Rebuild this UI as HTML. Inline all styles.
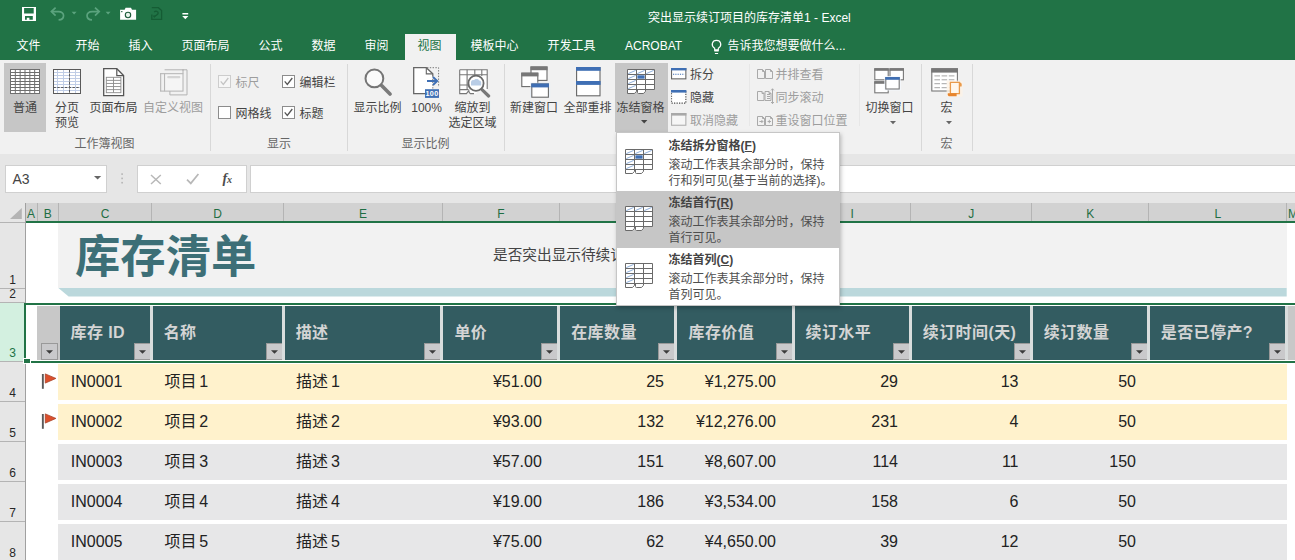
<!DOCTYPE html>
<html lang="zh-CN">
<head>
<meta charset="utf-8">
<title>突出显示续订项目的库存清单1 - Excel</title>
<style>
html,body{margin:0;padding:0}
body{width:1295px;height:560px;overflow:hidden;position:relative;background:#fff;font-family:"Liberation Sans","Noto Sans CJK SC",sans-serif;color:#444;font-size:12px}
.b,.t,.ic{position:absolute}
.t{white-space:nowrap}
</style>
</head>
<body>
<div class="b" style="left:0px;top:0px;width:1295px;height:60px;background:#217346;"></div>
<div class="t" style="top:10px;font-size:12px;line-height:16px;height:16px;left:648.08px;color:#fff;">突出显示续订项目的库存清单1 - Excel</div>
<svg class="ic" style="left:22px;top:7px;" width="14" height="14" viewBox="0 0 14 14"><path fill="#fff" fill-rule="evenodd" d="M0 0H14V14H0z M2.1 1.1H11.7V6.5H2.1z M3 9.1H10.8V12.7H7.4V10.8H4.8V12.7H3z"/></svg>
<svg class="ic" style="left:50px;top:6px;" width="28" height="16" viewBox="0 0 28 16"><g fill="none" stroke="#5ba37e" stroke-width="1.7"><path d="M5.6 1.6L1.4 5.6L5.6 9.6"/><path d="M1.6 5.6H8.4C15.5 5.6 15 13.6 8.6 13.9"/></g><path d="M21.6 5.8H26.6L24.1 8.4z" fill="#5ba37e"/></svg>
<svg class="ic" style="left:85px;top:6px;" width="28" height="16" viewBox="0 0 28 16"><g fill="none" stroke="#5ba37e" stroke-width="1.7"><path d="M10 1.6L14.2 5.6L10 9.6"/><path d="M14 5.6H7.2C0.1 5.6 0.6 13.6 7 13.9"/></g><path d="M20.6 5.8H25.6L23.1 8.4z" fill="#5ba37e"/></svg>
<svg class="ic" style="left:119px;top:7px;" width="19" height="14" viewBox="0 0 19 14"><path fill="#fff" d="M1.1 2.8H5.6L6.6 .8H12L13 2.8H17.1V12.8H1.1z"/><circle cx="9" cy="8" r="2.7" fill="#e8f4ec" stroke="#1d5c3a" stroke-width="1.1"/><rect x="2.2" y="4" width="1.2" height="1.2" fill="#1d5c3a"/></svg>
<svg class="ic" style="left:150px;top:6px;" width="14" height="15" viewBox="0 0 14 15"><g fill="none" stroke="#155c34" stroke-width="1.3"><path d="M1.8 1.7H8.4L11.6 4.6V13.4H1.8V8.5"/><path d="M4.2 6.2C5.6 4.4 8.4 5.2 8.2 7.2C8 8.8 6 9.3 4.4 10.6"/></g><path d="M2.6 9.4L4.2 12L6.4 9.6z" fill="#155c34"/></svg>
<svg class="ic" style="left:182px;top:12px;" width="7" height="8" viewBox="0 0 7 8"><path fill="#fff" d="M.4 1H6.2V2.4H.4z M.2 3.9H6.4L3.3 7.2z"/></svg>
<div class="b" style="left:405px;top:34px;width:51px;height:26px;background:#f1f1f1;"></div>
<div class="t" style="top:38px;font-size:12px;line-height:16px;height:16px;left:16.58px;color:#fff;">文件</div>
<div class="t" style="top:38px;font-size:12px;line-height:16px;height:16px;left:75.58px;color:#fff;">开始</div>
<div class="t" style="top:38px;font-size:12px;line-height:16px;height:16px;left:128.58px;color:#fff;">插入</div>
<div class="t" style="top:38px;font-size:12px;line-height:16px;height:16px;left:181.58px;color:#fff;">页面布局</div>
<div class="t" style="top:38px;font-size:12px;line-height:16px;height:16px;left:258.58px;color:#fff;">公式</div>
<div class="t" style="top:38px;font-size:12px;line-height:16px;height:16px;left:311.58px;color:#fff;">数据</div>
<div class="t" style="top:38px;font-size:12px;line-height:16px;height:16px;left:364.58px;color:#fff;">审阅</div>
<div class="t" style="top:38px;font-size:12px;line-height:16px;height:16px;left:470.58px;color:#fff;">模板中心</div>
<div class="t" style="top:38px;font-size:12px;line-height:16px;height:16px;left:547.58px;color:#fff;">开发工具</div>
<div class="t" style="top:38px;font-size:12px;line-height:16px;height:16px;left:625px;color:#fff;">ACROBAT</div>
<div class="t" style="top:38px;font-size:12px;line-height:16px;height:16px;left:727.58px;color:#fff;">告诉我您想要做什么...</div>
<div class="t" style="top:38px;font-size:12px;line-height:16px;height:16px;left:417.58px;color:#217346;">视图</div>
<svg class="ic" style="left:710px;top:39px;" width="13" height="16" viewBox="0 0 13 16"><g fill="none" stroke="#fff" stroke-width="1.2"><path d="M4.6 9.2C.6 6.6 2 1.4 6.5 1.4C11 1.4 12.4 6.6 8.4 9.2L8.2 11.2H4.8z"/></g><path d="M4.3 10.6H8.7V12.6H4.3z M4.9 14H8.1V15H4.9z" fill="#fff"/></svg>
<div class="b" style="left:0px;top:60px;width:1295px;height:94px;background:#f1f1f1;"></div>
<div class="b" style="left:0px;top:153.5px;width:1295px;height:1px;background:#d2d2d2;"></div>
<div class="b" style="left:210px;top:64px;width:1px;height:87px;background:#d8d8d8;"></div>
<div class="b" style="left:347px;top:64px;width:1px;height:87px;background:#d8d8d8;"></div>
<div class="b" style="left:504px;top:64px;width:1px;height:87px;background:#d8d8d8;"></div>
<div class="b" style="left:921px;top:64px;width:1px;height:87px;background:#d8d8d8;"></div>
<div class="b" style="left:972px;top:64px;width:1px;height:87px;background:#d8d8d8;"></div>
<div class="b" style="left:749px;top:64px;width:1px;height:62px;background:#e7e7e7;"></div>
<div class="b" style="left:859px;top:64px;width:1px;height:62px;background:#e7e7e7;"></div>
<div class="b" style="left:4px;top:63px;width:42px;height:69px;background:#c6c6c6;"></div>
<div class="b" style="left:615px;top:63px;width:53px;height:69px;background:#c6c6c6;"></div>
<div class="t" style="top:100px;font-size:12px;line-height:16px;height:16px;left:-175px;width:400px;text-align:center;">普通</div>
<div class="t" style="top:100px;font-size:12px;line-height:16px;height:16px;left:-133px;width:400px;text-align:center;">分页</div>
<div class="t" style="top:114.5px;font-size:12px;line-height:16px;height:16px;left:-133px;width:400px;text-align:center;">预览</div>
<div class="t" style="top:100px;font-size:12px;line-height:16px;height:16px;left:89.58px;">页面布局</div>
<div class="t" style="top:100px;font-size:12px;line-height:16px;height:16px;left:143.08px;color:#9d9d9d;">自定义视图</div>
<div class="t" style="top:100px;font-size:12px;line-height:16px;height:16px;left:353.58px;">显示比例</div>
<div class="t" style="top:100px;font-size:12px;line-height:16px;height:16px;left:226.6px;width:400px;text-align:center;">100%</div>
<div class="t" style="top:100px;font-size:12px;line-height:16px;height:16px;left:454.58px;">缩放到</div>
<div class="t" style="top:114.5px;font-size:12px;line-height:16px;height:16px;left:448.58px;">选定区域</div>
<div class="t" style="top:100px;font-size:12px;line-height:16px;height:16px;left:510.08px;">新建窗口</div>
<div class="t" style="top:100px;font-size:12px;line-height:16px;height:16px;left:563.58px;">全部重排</div>
<div class="t" style="top:100px;font-size:12px;line-height:16px;height:16px;left:616.58px;">冻结窗格</div>
<div class="t" style="top:100px;font-size:12px;line-height:16px;height:16px;left:865.58px;">切换窗口</div>
<div class="t" style="top:100px;font-size:12px;line-height:16px;height:16px;left:940.58px;">宏</div>
<div class="t" style="top:136px;font-size:12px;line-height:16px;height:16px;left:74.58px;color:#666;">工作簿视图</div>
<div class="t" style="top:136px;font-size:12px;line-height:16px;height:16px;left:267.08px;color:#666;">显示</div>
<div class="t" style="top:136px;font-size:12px;line-height:16px;height:16px;left:401.58px;color:#666;">显示比例</div>
<div class="t" style="top:136px;font-size:12px;line-height:16px;height:16px;left:940.58px;color:#666;">宏</div>
<svg class="ic" style="left:218px;top:75px;" width="13" height="13" viewBox="0 0 13 13"><rect x=".5" y=".5" width="12" height="12" fill="#f6f6f6" stroke="#cdcdcd"/><path d="M2.7 6.4L5.3 9.4L10.3 3" fill="none" stroke="#c4c4c4" stroke-width="1.3"/></svg>
<div class="t" style="top:74.5px;font-size:12px;line-height:16px;height:16px;left:235.58px;color:#9d9d9d;">标尺</div>
<svg class="ic" style="left:282px;top:75px;" width="13" height="13" viewBox="0 0 13 13"><rect x=".5" y=".5" width="12" height="12" fill="#fff" stroke="#8c8c8c"/><path d="M2.7 6.4L5.3 9.4L10.3 3" fill="none" stroke="#555" stroke-width="1.3"/></svg>
<div class="t" style="top:74.5px;font-size:12px;line-height:16px;height:16px;left:299.58px;">编辑栏</div>
<svg class="ic" style="left:218px;top:106px;" width="13" height="13" viewBox="0 0 13 13"><rect x=".5" y=".5" width="12" height="12" fill="#fff" stroke="#8c8c8c"/></svg>
<div class="t" style="top:105.5px;font-size:12px;line-height:16px;height:16px;left:235.58px;">网格线</div>
<svg class="ic" style="left:282px;top:106px;" width="13" height="13" viewBox="0 0 13 13"><rect x=".5" y=".5" width="12" height="12" fill="#fff" stroke="#8c8c8c"/><path d="M2.7 6.4L5.3 9.4L10.3 3" fill="none" stroke="#555" stroke-width="1.3"/></svg>
<div class="t" style="top:105.5px;font-size:12px;line-height:16px;height:16px;left:299.58px;">标题</div>
<div class="t" style="top:67px;font-size:12px;line-height:16px;height:16px;left:689.88px;">拆分</div>
<div class="t" style="top:90px;font-size:12px;line-height:16px;height:16px;left:689.88px;">隐藏</div>
<div class="t" style="top:113px;font-size:12px;line-height:16px;height:16px;left:689.88px;color:#9d9d9d;">取消隐藏</div>
<div class="t" style="top:67px;font-size:12px;line-height:16px;height:16px;left:775.58px;color:#9d9d9d;">并排查看</div>
<div class="t" style="top:90px;font-size:12px;line-height:16px;height:16px;left:775.58px;color:#9d9d9d;">同步滚动</div>
<div class="t" style="top:113px;font-size:12px;line-height:16px;height:16px;left:775.58px;color:#9d9d9d;">重设窗口位置</div>
<svg class="ic" style="left:10px;top:69px;" width="30" height="25" viewBox="0 0 30 25"><rect x=".5" y=".5" width="29" height="24" fill="#fff"/><g stroke="#6e6e6e" stroke-width="1" fill="none"><path d="M0.5 0V25"/><path d="M5.33 0V25"/><path d="M10.17 0V25"/><path d="M15 0V25"/><path d="M19.83 0V25"/><path d="M24.67 0V25"/><path d="M29.5 0V25"/><path d="M0 0.5H30"/><path d="M0 3.5H30"/><path d="M0 6.5H30"/><path d="M0 9.5H30"/><path d="M0 12.5H30"/><path d="M0 15.5H30"/><path d="M0 18.5H30"/><path d="M0 21.5H30"/><path d="M0 24.5H30"/></g></svg>
<svg class="ic" style="left:53px;top:69px;" width="28" height="25" viewBox="0 0 28 25"><rect x=".5" y=".5" width="27" height="24" fill="#fff"/><g stroke="#c0cde6" stroke-width="1" fill="none"><path d="M4.5 0V25"/><path d="M10.5 0V25"/><path d="M22.5 0V25"/><path d="M0 3.5H28"/><path d="M0 6.5H28"/><path d="M0 9.5H28"/><path d="M0 12.5H28"/><path d="M0 15.5H28"/><path d="M0 18.5H28"/><path d="M0 21.5H28"/></g><g stroke="#595959" stroke-width="1" fill="none"><rect x=".5" y=".5" width="27" height="24"/><path d="M16.5 .5V25" stroke-dasharray="3.2 .8"/><path d="M.5 18.5H28" stroke-dasharray="2.4 1.4"/></g></svg>
<svg class="ic" style="left:102.5px;top:67.6px;" width="22" height="29" viewBox="0 0 22 29"><path d="M.7 .7H13.8L20.6 7.6V27.6H.7z" fill="#fff" stroke="#555" stroke-width="1.3"/><path d="M13.8 .7V7.6H20.6" fill="none" stroke="#555" stroke-width="1.2"/><g stroke="#8a8a8a" stroke-width=".9" fill="none"><rect x="3.3" y="9.3" width="14.6" height="15.4"/><path d="M10.5 9.3V24.7"/><path d="M3.3 12.38H17.9"/><path d="M3.3 15.46H17.9"/><path d="M3.3 18.54H17.9"/><path d="M3.3 21.62H17.9"/></g></svg>
<svg class="ic" style="left:159.5px;top:68.5px;" width="28" height="27" viewBox="0 0 28 27"><g fill="none" stroke="#b2b2b2" stroke-width="1"><rect x="4.6" y="4.7" width="18.4" height="17.4" fill="#f5f5f5"/><path d="M.7 4.7V22.1M0 4.7H4.6M0 22.1H4.6"/><path d="M4.6 .8H23V4.7M23 .8H27V25.9H9.9V22.1M23 0V1.6"/></g><rect x="7.2" y="7" width="13.2" height="2.3" rx="1" fill="#d4d4d4"/></svg>
<svg class="ic" style="left:363.6px;top:67.6px;" width="28" height="28" viewBox="0 0 28 28"><path d="M17.6 17.6L26 26" stroke="#7a7a7a" stroke-width="3.6" stroke-linecap="round"/><circle cx="10.4" cy="10.4" r="8.9" fill="#fafafa" stroke="#757575" stroke-width="2"/></svg>
<svg class="ic" style="left:413px;top:66.8px;" width="27" height="31.5" viewBox="0 0 27 31.5"><path d="M.7 .7H13.3L19.8 6.9V26.6H.7z" fill="#fff"/><path d="M19.8 9V6.9L13.3 .7H.7V26.6H12" fill="none" stroke="#666" stroke-width="1.3"/><path d="M13.3 .7V6.9H19.8" fill="none" stroke="#666" stroke-width="1.1"/><path d="M14 .7H25.6V20M19.8 9V21.5" fill="none" stroke="#777" stroke-width="1" stroke-dasharray="1.4 1.4"/><path d="M14 14H23.6M20 10L24.2 14L20 18" fill="none" stroke="#3f6fb4" stroke-width="1.9"/><rect x="12" y="22.2" width="14" height="8.7" fill="#3f6fb4"/><text x="19" y="29.4" font-family="Liberation Sans, sans-serif" font-size="7.2" font-weight="bold" fill="#fff" text-anchor="middle" letter-spacing=".3">100</text></svg>
<svg class="ic" style="left:458.5px;top:68.5px;" width="32" height="29" viewBox="0 0 32 29"><path d="M.7 .7H28.2V21H19.2L17.4 24.6H10.6L9.8 21.6L7.4 24.6H.7z" fill="#fff"/><g fill="none" stroke="#777" stroke-width="1.1"><path d="M.7 .7H28.2V20M.7 .7V24.6H7.4L9.8 21.6C10 23.4 10.4 24.4 11.4 24.6H15"/><path d="M8.1 .7V21M15.8 .7V7M22.8 .7V7M.7 5.8H28.2M.7 16H9M.7 20.6H9.6"/></g><path d="M23 20.6L29.6 27" stroke="#777" stroke-width="3.2" stroke-linecap="round"/><circle cx="17" cy="14.3" r="7.6" fill="#fff" stroke="#6a6a6a" stroke-width="1.8"/><path d="M12 16.6V13.4C12 11.6 13.4 10.6 15 11.2C15.8 9.6 19.4 9.4 20 11.4C21.6 11.2 22.2 12.4 22.2 13.6V16.6z" fill="#b9cde6"/></svg>
<svg class="ic" style="left:520.5px;top:66px;" width="30" height="33" viewBox="0 0 30 33"><rect x="10" y="1" width="16" height="13.4" fill="#fff" stroke="#6a6a6a" stroke-width="1.1"/><rect x="9.45" y="0.45" width="17.1" height="3.75" fill="#777"/><rect x="0.8" y="7.2" width="16" height="13.4" fill="#fff" stroke="#6a6a6a" stroke-width="1.1"/><rect x="0.25" y="6.65" width="17.1" height="3.75" fill="#777"/><rect x="9.2" y="16.6" width="20" height="15" fill="#e6f0fb" opacity=".7"/><rect x="10.8" y="18" width="16.6" height="13.2" fill="#fff" stroke="#6a6a6a" stroke-width="1.1"/><rect x="10.25" y="17.45" width="17.7" height="3.95" fill="#3f6fb4"/></svg>
<svg class="ic" style="left:575.6px;top:66.9px;" width="25" height="30" viewBox="0 0 25 30"><rect x=".6" y=".6" width="23.4" height="28.2" fill="#fff" stroke="#666" stroke-width="1.1"/><rect x="0" y="0" width="24.6" height="3.8" fill="#3f6fb4"/><rect x="0" y="14" width="24.6" height="3.9" fill="#3f6fb4"/></svg>
<svg class="ic" style="left:626px;top:68px;" width="30" height="27" viewBox="0 0 30 27"><g transform="translate(1.5 1.5)"><path fill="#fff" d="M0 0H27V20H18V22L16 24H10V20H9V22L7 24H0z"/><path d="M0.8 4.1L8.2 0.9" stroke="#8fb0dc" stroke-width="1" fill="none"/><path d="M9.8 4.1L17.2 0.9" stroke="#8fb0dc" stroke-width="1" fill="none"/><path d="M18.8 4.1L26.2 0.9" stroke="#8fb0dc" stroke-width="1" fill="none"/><path d="M0.8 9.1L8.2 5.9" stroke="#8fb0dc" stroke-width="1" fill="none"/><path d="M0.8 14.1L8.2 10.9" stroke="#8fb0dc" stroke-width="1" fill="none"/><path d="M0.8 19.1L8.2 15.9" stroke="#8fb0dc" stroke-width="1" fill="none"/><rect x="9.9" y="5.8" width="7.2" height="3.4" fill="#3f6fb4"/><g fill="none" stroke="#6a6a6a" stroke-width="1"><path d="M0 0H27V20H0z"/><path d="M9 0V20"/><path d="M18 0V20"/><path d="M0 5H27"/><path d="M0 10H27"/><path d="M0 15H27"/><path d="M0 20V24H7L9 21.8V20"/><path d="M10 20V23Q10 24 11 24H16L18 21.8V20"/></g></g></svg>
<svg class="ic" style="left:640.6px;top:120.4px;" width="7" height="4" viewBox="0 0 7 4"><path d="M0 0H6.4L3.2 3.4z" fill="#444"/></svg>
<svg class="ic" style="left:670.8px;top:68.2px;" width="16" height="12" viewBox="0 0 16 12"><rect x=".55" y=".55" width="14.3" height="10.3" fill="#fff" stroke="#666" stroke-width="1.1"/><rect width="15.4" height="2.4" fill="#3f6fb4"/><path d="M2 6.3H13.6" stroke="#3f6fb4" stroke-width="1.1" stroke-dasharray="1.2 1.1"/></svg>
<svg class="ic" style="left:670.8px;top:90px;" width="16" height="14.5" viewBox="0 0 16 14.5"><rect x=".55" y=".55" width="14.3" height="12.6" fill="#fff" stroke="#444" stroke-width="1.1" stroke-dasharray="1.2 1.3"/><rect width="15.4" height="2.6" fill="#3f6fb4"/></svg>
<svg class="ic" style="left:670.8px;top:113.2px;" width="16" height="13.5" viewBox="0 0 16 13.5"><rect x=".55" y=".55" width="14.3" height="11.7" fill="#f6f6f6" stroke="#b0b0b0" stroke-width="1.1"/><rect width="15.4" height="2.6" fill="#a8a8a8"/></svg>
<svg class="ic" style="left:757px;top:68.5px;" width="17" height="11" viewBox="0 0 17 11"><g fill="none" stroke="#a9a9a9" stroke-width="1"><path d="M5.5 0.5H0.5V9.5H7.5V2.5z"/><path d="M5.5 0.5V2.5H7.5"/><path d="M13.5 0.5H8.5V9.5H15.5V2.5z"/><path d="M13.5 0.5V2.5H15.5"/></g></svg>
<svg class="ic" style="left:757px;top:88px;" width="18" height="17" viewBox="0 0 18 17"><g fill="none" stroke="#a9a9a9" stroke-width="1"><path d="M5 3.5H0.5V12.5H7V5.5z"/><path d="M5 3.5V5.5H7"/><path d="M12 3.5H8V12.5H14V5.5z"/><path d="M12 3.5V5.5H14"/><path d="M10 6.5H13M10 8.5H13M10 10.5H13M15.5 .8V15.6M14.1 2.4L15.5 .8L16.9 2.4M14.1 14L15.5 15.6L16.9 14"/></g></svg>
<svg class="ic" style="left:757px;top:115.5px;" width="17" height="11" viewBox="0 0 17 11"><g fill="none" stroke="#a9a9a9" stroke-width="1"><path d="M5.5 0.5H0.5V9.5H7.5V2.5z"/><path d="M5.5 0.5V2.5H7.5"/><path d="M13.5 0.5H8.5V9.5H15.5V2.5z"/><path d="M13.5 0.5V2.5H15.5"/><path d="M2.4 5.5H5.8M4.4 4L5.9 5.5L4.4 7M10.6 5.5H14M12.3 3.8V7.2"/></g></svg>
<svg class="ic" style="left:874.4px;top:67.5px;" width="31" height="26" viewBox="0 0 31 26"><rect x="0.8" y="0.8" width="13.4" height="11" fill="#fff" stroke="#777" stroke-width="1.1"/><rect x="0.25" y="0.25" width="14.5" height="2.55" fill="#777"/><rect x="16" y="0.8" width="13.4" height="11" fill="#fff" stroke="#777" stroke-width="1.1"/><rect x="15.45" y="0.25" width="14.5" height="2.55" fill="#777"/><rect x="0.8" y="13.8" width="13.4" height="11" fill="#fff" stroke="#777" stroke-width="1.1"/><rect x="0.25" y="13.25" width="14.5" height="2.55" fill="#777"/><rect x="10.4" y="8.2" width="16.2" height="14.2" fill="#f4f9ff"/><rect x="11.8" y="9.6" width="13.4" height="11.4" fill="#fff" stroke="#777" stroke-width="1.1"/><rect x="11.25" y="9.05" width="14.5" height="2.75" fill="#3f6fb4"/></svg>
<svg class="ic" style="left:889.6px;top:120.8px;" width="7" height="4" viewBox="0 0 7 4"><path d="M0 0H6L3 3.2z" fill="#666"/></svg>
<svg class="ic" style="left:931.4px;top:67.5px;" width="33" height="30" viewBox="0 0 33 30"><rect x="0.8" y="0.8" width="25.6" height="22.2" fill="#fff" stroke="#777" stroke-width="1.1"/><rect x="0.25" y="0.25" width="26.7" height="4.35" fill="#777"/><path d="M3.4 7.9H23.4" stroke="#a6a6a6" stroke-width="1" stroke-dasharray="5.6 1.6"/><path d="M3.4 11.8H23.4" stroke="#a6a6a6" stroke-width="1" stroke-dasharray="5.6 1.6"/><path d="M3.4 15.7H23.4" stroke="#a6a6a6" stroke-width="1" stroke-dasharray="5.6 1.6"/><path d="M3.4 19.7H23.4" stroke="#a6a6a6" stroke-width="1" stroke-dasharray="5.6 1.6"/><rect x="15.6" y="12.6" width="16" height="16" fill="#fdf3e6" opacity=".8"/><path d="M19.4 14.4H28.4V25.6H19.4z" fill="#fff7ec" stroke="#e99a4a" stroke-width="1.3"/><path d="M17 25.2H25.6V28.2H18.4C16.6 28.2 16.4 25.6 17 25.2z" fill="#e8852c"/><path d="M28.4 14.4C30.8 14.2 31 16.4 30.6 18.4H28.4z" fill="#e99a4a"/></svg>
<svg class="ic" style="left:945.6px;top:120.8px;" width="7" height="4" viewBox="0 0 7 4"><path d="M0 0H6L3 3.2z" fill="#666"/></svg>
<div class="b" style="left:0px;top:154px;width:1295px;height:49px;background:#e6e6e6;"></div>
<div class="b" style="left:5px;top:165px;width:102px;height:28px;background:#fff;border:1px solid #d0d0d0;box-sizing:border-box;"></div>
<div class="b" style="left:137px;top:165px;width:110px;height:28px;background:#fff;border:1px solid #d0d0d0;box-sizing:border-box;"></div>
<div class="b" style="left:250px;top:165px;width:1050px;height:28px;background:#fff;border:1px solid #d0d0d0;box-sizing:border-box;"></div>
<div class="t" style="top:170px;font-size:14px;line-height:18px;height:18px;left:12.5px;color:#444;">A3</div>
<svg class="ic" style="left:94px;top:176.3px;" width="8" height="4" viewBox="0 0 8 4"><path d="M0 0H7.2L3.6 3.6z" fill="#666"/></svg>
<svg class="ic" style="left:120.8px;top:173px;" width="3" height="11" viewBox="0 0 3 11"><g fill="#b4b4b4"><rect x=".3" y=".3" width="1.6" height="1.6"/><rect x=".3" y="4.6" width="1.6" height="1.6"/><rect x=".3" y="8.9" width="1.6" height="1.6"/></g></svg>
<svg class="ic" style="left:150px;top:173.6px;" width="12" height="11" viewBox="0 0 12 11"><path d="M1 1L10.8 10M10.8 1L1 10" stroke="#b8b8b8" stroke-width="1.5" fill="none"/></svg>
<svg class="ic" style="left:185.6px;top:173.4px;" width="14" height="12" viewBox="0 0 14 12"><path d="M1 6.6L4.8 10.4L12.4 1" stroke="#b8b8b8" stroke-width="1.7" fill="none"/></svg>
<div class="t" style="left:222.5px;top:170px;font-family:'Liberation Serif',serif;font-style:italic;font-size:14px;line-height:18px;color:#4c4c4c;font-weight:bold">f<span style="font-size:10px;margin-left:-.3px">x</span></div>
<div class="b" style="left:0px;top:203px;width:1295px;height:357px;background:#fff;"></div>
<div class="b" style="left:0px;top:203px;width:1295px;height:18px;background:#d2d2d2;"></div>
<div class="b" style="left:0px;top:203px;width:25px;height:19px;background:#e6e6e6;"></div>
<div class="b" style="left:25px;top:221px;width:1270px;height:2px;background:#217346;"></div>
<div class="t" style="top:206px;font-size:12px;line-height:16px;height:16px;left:-169px;width:400px;text-align:center;color:#1f6e43;">A</div>
<div class="t" style="top:206px;font-size:12px;line-height:16px;height:16px;left:-152.2px;width:400px;text-align:center;color:#1f6e43;">B</div>
<div class="b" style="left:37px;top:203px;width:1px;height:18px;background:#b4b4b4;"></div>
<div class="t" style="top:206px;font-size:12px;line-height:16px;height:16px;left:-94.85px;width:400px;text-align:center;color:#1f6e43;">C</div>
<div class="b" style="left:58px;top:203px;width:1px;height:18px;background:#b4b4b4;"></div>
<div class="t" style="top:206px;font-size:12px;line-height:16px;height:16px;left:17.7px;width:400px;text-align:center;color:#1f6e43;">D</div>
<div class="b" style="left:151px;top:203px;width:1px;height:18px;background:#b4b4b4;"></div>
<div class="t" style="top:206px;font-size:12px;line-height:16px;height:16px;left:163.05px;width:400px;text-align:center;color:#1f6e43;">E</div>
<div class="b" style="left:283px;top:203px;width:1px;height:18px;background:#b4b4b4;"></div>
<div class="t" style="top:206px;font-size:12px;line-height:16px;height:16px;left:300.8px;width:400px;text-align:center;color:#1f6e43;">F</div>
<div class="b" style="left:442px;top:203px;width:1px;height:18px;background:#b4b4b4;"></div>
<div class="b" style="left:559px;top:203px;width:1px;height:18px;background:#b4b4b4;"></div>
<div class="b" style="left:676px;top:203px;width:1px;height:18px;background:#b4b4b4;"></div>
<div class="t" style="top:206px;font-size:12px;line-height:16px;height:16px;left:652.15px;width:400px;text-align:center;color:#1f6e43;">I</div>
<div class="b" style="left:793px;top:203px;width:1px;height:18px;background:#b4b4b4;"></div>
<div class="t" style="top:206px;font-size:12px;line-height:16px;height:16px;left:771.3px;width:400px;text-align:center;color:#1f6e43;">J</div>
<div class="b" style="left:910px;top:203px;width:1px;height:18px;background:#b4b4b4;"></div>
<div class="t" style="top:206px;font-size:12px;line-height:16px;height:16px;left:890.3px;width:400px;text-align:center;color:#1f6e43;">K</div>
<div class="b" style="left:1031px;top:203px;width:1px;height:18px;background:#b4b4b4;"></div>
<div class="t" style="top:206px;font-size:12px;line-height:16px;height:16px;left:1017.75px;width:400px;text-align:center;color:#1f6e43;">L</div>
<div class="b" style="left:1148px;top:203px;width:1px;height:18px;background:#b4b4b4;"></div>
<div class="t" style="top:206px;font-size:12px;line-height:16px;height:16px;left:1288px;color:#1f6e43;">M</div>
<div class="b" style="left:1286px;top:203px;width:1px;height:18px;background:#b4b4b4;"></div>
<svg class="ic" style="left:10px;top:208px;" width="12" height="11" viewBox="0 0 12 11"><path d="M11.8 0V10.9H0z" fill="#b4b4b4"/></svg>
<div class="b" style="left:0px;top:222px;width:25px;height:338px;background:#e6e6e6;"></div>
<div class="b" style="left:25px;top:203px;width:1px;height:357px;background:#a0a0a0;"></div>
<div class="b" style="left:0px;top:288px;width:25px;height:1px;background:#b4b4b4;"></div>
<div class="t" style="top:272px;font-size:12px;line-height:16px;height:16px;left:-187.3px;width:400px;text-align:center;color:#262626;">1</div>
<div class="b" style="left:0px;top:302px;width:25px;height:1px;background:#b4b4b4;"></div>
<div class="t" style="top:286px;font-size:12px;line-height:16px;height:16px;left:-187.3px;width:400px;text-align:center;color:#262626;">2</div>
<div class="b" style="left:0px;top:303px;width:25px;height:59px;background:#d3f0e0;"></div>
<div class="b" style="left:0px;top:361px;width:25px;height:1px;background:#b4b4b4;"></div>
<div class="t" style="top:345px;font-size:12px;line-height:16px;height:16px;left:-187.3px;width:400px;text-align:center;color:#217346;">3</div>
<div class="b" style="left:0px;top:401px;width:25px;height:1px;background:#b4b4b4;"></div>
<div class="t" style="top:385px;font-size:12px;line-height:16px;height:16px;left:-187.3px;width:400px;text-align:center;color:#262626;">4</div>
<div class="b" style="left:0px;top:441px;width:25px;height:1px;background:#b4b4b4;"></div>
<div class="t" style="top:425px;font-size:12px;line-height:16px;height:16px;left:-187.3px;width:400px;text-align:center;color:#262626;">5</div>
<div class="b" style="left:0px;top:481px;width:25px;height:1px;background:#b4b4b4;"></div>
<div class="t" style="top:465px;font-size:12px;line-height:16px;height:16px;left:-187.3px;width:400px;text-align:center;color:#262626;">6</div>
<div class="b" style="left:0px;top:521px;width:25px;height:1px;background:#b4b4b4;"></div>
<div class="t" style="top:505px;font-size:12px;line-height:16px;height:16px;left:-187.3px;width:400px;text-align:center;color:#262626;">7</div>
<div class="b" style="left:0px;top:561px;width:25px;height:1px;background:#b4b4b4;"></div>
<div class="t" style="top:545px;font-size:12px;line-height:16px;height:16px;left:-187.3px;width:400px;text-align:center;color:#262626;">8</div>
<div class="b" style="left:0px;top:222px;width:25px;height:1px;background:#b4b4b4;"></div>
<div class="b" style="left:58px;top:223px;width:1228.7px;height:65px;background:#f2f2f2;"></div>
<svg class="ic" style="left:58px;top:288px;" width="1229" height="9" viewBox="0 0 1229 9"><path d="M0.4 0H1228.7V8.4H10.6z" fill="#bbd8dc"/></svg>
<div class="t hv" style="top:227.8px;font-size:45.33px;line-height:59px;height:59px;left:75px;color:#3d6f77;font-weight:bold;">库存清单</div>
<div class="t d" style="top:245.7px;font-size:14.67px;line-height:19px;height:19px;left:493px;color:#444;">是否突出显示待续订项目?</div>
<div class="b" style="left:37px;top:306px;width:1258px;height:54px;background:#c8c8c8;"></div>
<div class="b" style="left:60px;top:306px;width:90px;height:53.6px;background:#335c61;"></div>
<div class="t hd" style="top:322.2px;font-size:16px;line-height:21px;height:21px;left:70.6px;color:#d4d4d4;font-weight:bold;letter-spacing:.4px;">库存 ID</div>
<svg class="ic" style="left:134px;top:343px;" width="17" height="17" viewBox="0 0 17 17"><rect x=".5" y=".5" width="16" height="16" fill="#c9c9cb" stroke="#999"/><path d="M5 7.3H12L8.5 10.8z" fill="#3c3c3c"/></svg>
<div class="b" style="left:153px;top:306px;width:129px;height:53.6px;background:#335c61;"></div>
<div class="t hd" style="top:322.2px;font-size:16px;line-height:21px;height:21px;left:163.7px;color:#d4d4d4;font-weight:bold;letter-spacing:.4px;">名称</div>
<svg class="ic" style="left:266px;top:343px;" width="17" height="17" viewBox="0 0 17 17"><rect x=".5" y=".5" width="16" height="16" fill="#c9c9cb" stroke="#999"/><path d="M5 7.3H12L8.5 10.8z" fill="#3c3c3c"/></svg>
<div class="b" style="left:285px;top:306px;width:155px;height:53.6px;background:#335c61;"></div>
<div class="t hd" style="top:322.2px;font-size:16px;line-height:21px;height:21px;left:295.7px;color:#d4d4d4;font-weight:bold;letter-spacing:.4px;">描述</div>
<svg class="ic" style="left:424px;top:343px;" width="17" height="17" viewBox="0 0 17 17"><rect x=".5" y=".5" width="16" height="16" fill="#c9c9cb" stroke="#999"/><path d="M5 7.3H12L8.5 10.8z" fill="#3c3c3c"/></svg>
<div class="b" style="left:443px;top:306px;width:114px;height:53.6px;background:#335c61;"></div>
<div class="t hd" style="top:322.2px;font-size:16px;line-height:21px;height:21px;left:454.4px;color:#d4d4d4;font-weight:bold;letter-spacing:.4px;">单价</div>
<svg class="ic" style="left:541px;top:343px;" width="17" height="17" viewBox="0 0 17 17"><rect x=".5" y=".5" width="16" height="16" fill="#c9c9cb" stroke="#999"/><path d="M5 7.3H12L8.5 10.8z" fill="#3c3c3c"/></svg>
<div class="b" style="left:560px;top:306px;width:114px;height:53.6px;background:#335c61;"></div>
<div class="t hd" style="top:322.2px;font-size:16px;line-height:21px;height:21px;left:571.2px;color:#d4d4d4;font-weight:bold;letter-spacing:.4px;">在库数量</div>
<svg class="ic" style="left:658px;top:343px;" width="17" height="17" viewBox="0 0 17 17"><rect x=".5" y=".5" width="16" height="16" fill="#c9c9cb" stroke="#999"/><path d="M5 7.3H12L8.5 10.8z" fill="#3c3c3c"/></svg>
<div class="b" style="left:677px;top:306px;width:115px;height:53.6px;background:#335c61;"></div>
<div class="t hd" style="top:322.2px;font-size:16px;line-height:21px;height:21px;left:688.5px;color:#d4d4d4;font-weight:bold;letter-spacing:.4px;">库存价值</div>
<svg class="ic" style="left:776px;top:343px;" width="17" height="17" viewBox="0 0 17 17"><rect x=".5" y=".5" width="16" height="16" fill="#c9c9cb" stroke="#999"/><path d="M5 7.3H12L8.5 10.8z" fill="#3c3c3c"/></svg>
<div class="b" style="left:795px;top:306px;width:114px;height:53.6px;background:#335c61;"></div>
<div class="t hd" style="top:322.2px;font-size:16px;line-height:21px;height:21px;left:805.5px;color:#d4d4d4;font-weight:bold;letter-spacing:.4px;">续订水平</div>
<svg class="ic" style="left:893px;top:343px;" width="17" height="17" viewBox="0 0 17 17"><rect x=".5" y=".5" width="16" height="16" fill="#c9c9cb" stroke="#999"/><path d="M5 7.3H12L8.5 10.8z" fill="#3c3c3c"/></svg>
<div class="b" style="left:912px;top:306px;width:118px;height:53.6px;background:#335c61;"></div>
<div class="t hd" style="top:322.2px;font-size:16px;line-height:21px;height:21px;left:922.8px;color:#d4d4d4;font-weight:bold;letter-spacing:.4px;">续订时间(天)</div>
<svg class="ic" style="left:1014px;top:343px;" width="17" height="17" viewBox="0 0 17 17"><rect x=".5" y=".5" width="16" height="16" fill="#c9c9cb" stroke="#999"/><path d="M5 7.3H12L8.5 10.8z" fill="#3c3c3c"/></svg>
<div class="b" style="left:1033px;top:306px;width:114px;height:53.6px;background:#335c61;"></div>
<div class="t hd" style="top:322.2px;font-size:16px;line-height:21px;height:21px;left:1043.8px;color:#d4d4d4;font-weight:bold;letter-spacing:.4px;">续订数量</div>
<svg class="ic" style="left:1131px;top:343px;" width="17" height="17" viewBox="0 0 17 17"><rect x=".5" y=".5" width="16" height="16" fill="#c9c9cb" stroke="#999"/><path d="M5 7.3H12L8.5 10.8z" fill="#3c3c3c"/></svg>
<div class="b" style="left:1150px;top:306px;width:135px;height:53.6px;background:#335c61;"></div>
<div class="t hd" style="top:322.2px;font-size:16px;line-height:21px;height:21px;left:1160.8px;color:#d4d4d4;font-weight:bold;letter-spacing:.4px;">是否已停产?</div>
<svg class="ic" style="left:1269px;top:343px;" width="17" height="17" viewBox="0 0 17 17"><rect x=".5" y=".5" width="16" height="16" fill="#c9c9cb" stroke="#999"/><path d="M5 7.3H12L8.5 10.8z" fill="#3c3c3c"/></svg>
<div class="b" style="left:150px;top:306px;width:3px;height:53.6px;background:#d9dddd;"></div>
<div class="b" style="left:282px;top:306px;width:3px;height:53.6px;background:#d9dddd;"></div>
<div class="b" style="left:440px;top:306px;width:3px;height:53.6px;background:#d9dddd;"></div>
<div class="b" style="left:557px;top:306px;width:3px;height:53.6px;background:#d9dddd;"></div>
<div class="b" style="left:674px;top:306px;width:3px;height:53.6px;background:#d9dddd;"></div>
<div class="b" style="left:792px;top:306px;width:3px;height:53.6px;background:#d9dddd;"></div>
<div class="b" style="left:909px;top:306px;width:3px;height:53.6px;background:#d9dddd;"></div>
<div class="b" style="left:1030px;top:306px;width:3px;height:53.6px;background:#d9dddd;"></div>
<div class="b" style="left:1147px;top:306px;width:3px;height:53.6px;background:#d9dddd;"></div>
<div class="b" style="left:1285px;top:306px;width:3px;height:53.6px;background:#d9dddd;"></div>
<svg class="ic" style="left:41px;top:343px;" width="17" height="17" viewBox="0 0 17 17"><rect x=".5" y=".5" width="16" height="16" fill="#c9c9cb" stroke="#999"/><path d="M5 7.3H12L8.5 10.8z" fill="#3c3c3c"/></svg>
<div class="b" style="left:24px;top:303px;width:1271px;height:2px;background:#217346;"></div>
<div class="b" style="left:24px;top:303px;width:2px;height:60px;background:#217346;"></div>
<div class="b" style="left:26px;top:305px;width:1269px;height:1px;background:#fff;"></div>
<div class="b" style="left:26px;top:359.6px;width:1269px;height:1.4px;background:#fff;"></div>
<div class="b" style="left:24px;top:361px;width:1271px;height:2px;background:#217346;"></div>
<div class="b" style="left:26px;top:306px;width:11px;height:55px;background:#fff;"></div>
<div class="b" style="left:23px;top:358px;width:8px;height:6.4px;background:#fff;"></div>
<div class="b" style="left:24px;top:359px;width:6px;height:4.4px;background:#217346;"></div>
<div class="b" style="left:58px;top:364px;width:1229px;height:36px;background:#fff2cc;"></div>
<div class="t" style="top:371px;font-size:16px;line-height:21px;height:21px;left:70.8px;color:#222;">IN0001</div>
<div class="t d" style="top:371px;font-size:16px;line-height:21px;height:21px;left:164.4px;color:#222;word-spacing:-1.5px;">项目 1</div>
<div class="t d" style="top:371px;font-size:16px;line-height:21px;height:21px;left:296px;color:#222;word-spacing:-1.5px;">描述 1</div>
<div class="t" style="top:371px;font-size:16px;line-height:21px;height:21px;right:753.2px;text-align:right;color:#222;">¥51.00</div>
<div class="t" style="top:371px;font-size:16px;line-height:21px;height:21px;right:631px;text-align:right;color:#222;">25</div>
<div class="t" style="top:371px;font-size:16px;line-height:21px;height:21px;right:519px;text-align:right;color:#222;">¥1,275.00</div>
<div class="t" style="top:371px;font-size:16px;line-height:21px;height:21px;right:397px;text-align:right;color:#222;">29</div>
<div class="t" style="top:371px;font-size:16px;line-height:21px;height:21px;right:276.5px;text-align:right;color:#222;">13</div>
<div class="t" style="top:371px;font-size:16px;line-height:21px;height:21px;right:159px;text-align:right;color:#222;">50</div>
<svg class="ic" style="left:41px;top:373px;" width="16" height="17" viewBox="0 0 16 17"><rect x=".9" y="1" width="1.9" height="14.8" fill="#5a5a5a"/><path d="M4.3 .9L14.9 5.4L4.3 10.1z" fill="#dc4f2c" stroke="#a84026" stroke-width=".8"/></svg>
<div class="b" style="left:58px;top:404px;width:1229px;height:36px;background:#fff2cc;"></div>
<div class="t" style="top:411px;font-size:16px;line-height:21px;height:21px;left:70.8px;color:#222;">IN0002</div>
<div class="t d" style="top:411px;font-size:16px;line-height:21px;height:21px;left:164.4px;color:#222;word-spacing:-1.5px;">项目 2</div>
<div class="t d" style="top:411px;font-size:16px;line-height:21px;height:21px;left:296px;color:#222;word-spacing:-1.5px;">描述 2</div>
<div class="t" style="top:411px;font-size:16px;line-height:21px;height:21px;right:753.2px;text-align:right;color:#222;">¥93.00</div>
<div class="t" style="top:411px;font-size:16px;line-height:21px;height:21px;right:631px;text-align:right;color:#222;">132</div>
<div class="t" style="top:411px;font-size:16px;line-height:21px;height:21px;right:519px;text-align:right;color:#222;">¥12,276.00</div>
<div class="t" style="top:411px;font-size:16px;line-height:21px;height:21px;right:397px;text-align:right;color:#222;">231</div>
<div class="t" style="top:411px;font-size:16px;line-height:21px;height:21px;right:276.5px;text-align:right;color:#222;">4</div>
<div class="t" style="top:411px;font-size:16px;line-height:21px;height:21px;right:159px;text-align:right;color:#222;">50</div>
<svg class="ic" style="left:41px;top:413px;" width="16" height="17" viewBox="0 0 16 17"><rect x=".9" y="1" width="1.9" height="14.8" fill="#5a5a5a"/><path d="M4.3 .9L14.9 5.4L4.3 10.1z" fill="#dc4f2c" stroke="#a84026" stroke-width=".8"/></svg>
<div class="b" style="left:58px;top:444px;width:1229px;height:36px;background:#e7e7e8;"></div>
<div class="t" style="top:451px;font-size:16px;line-height:21px;height:21px;left:70.8px;color:#222;">IN0003</div>
<div class="t d" style="top:451px;font-size:16px;line-height:21px;height:21px;left:164.4px;color:#222;word-spacing:-1.5px;">项目 3</div>
<div class="t d" style="top:451px;font-size:16px;line-height:21px;height:21px;left:296px;color:#222;word-spacing:-1.5px;">描述 3</div>
<div class="t" style="top:451px;font-size:16px;line-height:21px;height:21px;right:753.2px;text-align:right;color:#222;">¥57.00</div>
<div class="t" style="top:451px;font-size:16px;line-height:21px;height:21px;right:631px;text-align:right;color:#222;">151</div>
<div class="t" style="top:451px;font-size:16px;line-height:21px;height:21px;right:519px;text-align:right;color:#222;">¥8,607.00</div>
<div class="t" style="top:451px;font-size:16px;line-height:21px;height:21px;right:397px;text-align:right;color:#222;">114</div>
<div class="t" style="top:451px;font-size:16px;line-height:21px;height:21px;right:276.5px;text-align:right;color:#222;">11</div>
<div class="t" style="top:451px;font-size:16px;line-height:21px;height:21px;right:159px;text-align:right;color:#222;">150</div>
<div class="b" style="left:58px;top:484px;width:1229px;height:36px;background:#e7e7e8;"></div>
<div class="t" style="top:491px;font-size:16px;line-height:21px;height:21px;left:70.8px;color:#222;">IN0004</div>
<div class="t d" style="top:491px;font-size:16px;line-height:21px;height:21px;left:164.4px;color:#222;word-spacing:-1.5px;">项目 4</div>
<div class="t d" style="top:491px;font-size:16px;line-height:21px;height:21px;left:296px;color:#222;word-spacing:-1.5px;">描述 4</div>
<div class="t" style="top:491px;font-size:16px;line-height:21px;height:21px;right:753.2px;text-align:right;color:#222;">¥19.00</div>
<div class="t" style="top:491px;font-size:16px;line-height:21px;height:21px;right:631px;text-align:right;color:#222;">186</div>
<div class="t" style="top:491px;font-size:16px;line-height:21px;height:21px;right:519px;text-align:right;color:#222;">¥3,534.00</div>
<div class="t" style="top:491px;font-size:16px;line-height:21px;height:21px;right:397px;text-align:right;color:#222;">158</div>
<div class="t" style="top:491px;font-size:16px;line-height:21px;height:21px;right:276.5px;text-align:right;color:#222;">6</div>
<div class="t" style="top:491px;font-size:16px;line-height:21px;height:21px;right:159px;text-align:right;color:#222;">50</div>
<div class="b" style="left:58px;top:524px;width:1229px;height:36px;background:#e7e7e8;"></div>
<div class="t" style="top:531px;font-size:16px;line-height:21px;height:21px;left:70.8px;color:#222;">IN0005</div>
<div class="t d" style="top:531px;font-size:16px;line-height:21px;height:21px;left:164.4px;color:#222;word-spacing:-1.5px;">项目 5</div>
<div class="t d" style="top:531px;font-size:16px;line-height:21px;height:21px;left:296px;color:#222;word-spacing:-1.5px;">描述 5</div>
<div class="t" style="top:531px;font-size:16px;line-height:21px;height:21px;right:753.2px;text-align:right;color:#222;">¥75.00</div>
<div class="t" style="top:531px;font-size:16px;line-height:21px;height:21px;right:631px;text-align:right;color:#222;">62</div>
<div class="t" style="top:531px;font-size:16px;line-height:21px;height:21px;right:519px;text-align:right;color:#222;">¥4,650.00</div>
<div class="t" style="top:531px;font-size:16px;line-height:21px;height:21px;right:397px;text-align:right;color:#222;">39</div>
<div class="t" style="top:531px;font-size:16px;line-height:21px;height:21px;right:276.5px;text-align:right;color:#222;">12</div>
<div class="t" style="top:531px;font-size:16px;line-height:21px;height:21px;right:159px;text-align:right;color:#222;">50</div>
<div class="b" style="left:616px;top:132px;width:224px;height:174px;background:#fff;box-sizing:border-box;border:1px solid #c6c6c6;box-shadow:1px 2px 4px rgba(0,0,0,.25);"></div>
<div class="b" style="left:617px;top:191px;width:222px;height:56.5px;background:#c6c6c6;"></div>
<div class="t" style="top:138px;font-size:12px;line-height:16px;height:16px;left:668.58px;color:#444;font-weight:bold;">冻结拆分窗格(<u>F</u>)</div>
<div class="t" style="top:156.6px;font-size:12px;line-height:16px;height:16px;left:668.58px;color:#4e4e4e;">滚动工作表其余部分时，保持</div>
<div class="t" style="top:172.6px;font-size:12px;line-height:16px;height:16px;left:668.58px;color:#4e4e4e;">行和列可见(基于当前的选择)。</div>
<svg class="ic" style="left:624px;top:148px;" width="30" height="27" viewBox="0 0 30 27"><g transform="translate(1.5 1.5)"><path fill="#fff" d="M0 0H27V20H18V22L16 24H10V20H9V22L7 24H0z"/><path d="M0.8 4.1L8.2 0.9" stroke="#8fb0dc" stroke-width="1" fill="none"/><path d="M9.8 4.1L17.2 0.9" stroke="#8fb0dc" stroke-width="1" fill="none"/><path d="M18.8 4.1L26.2 0.9" stroke="#8fb0dc" stroke-width="1" fill="none"/><path d="M0.8 9.1L8.2 5.9" stroke="#8fb0dc" stroke-width="1" fill="none"/><path d="M0.8 14.1L8.2 10.9" stroke="#8fb0dc" stroke-width="1" fill="none"/><path d="M0.8 19.1L8.2 15.9" stroke="#8fb0dc" stroke-width="1" fill="none"/><rect x="9.9" y="5.8" width="7.2" height="3.4" fill="#3f6fb4"/><g fill="none" stroke="#6a6a6a" stroke-width="1"><path d="M0 0H27V20H0z"/><path d="M9 0V20"/><path d="M18 0V20"/><path d="M0 5H27"/><path d="M0 10H27"/><path d="M0 15H27"/><path d="M0 20V24H7L9 21.8V20"/><path d="M10 20V23Q10 24 11 24H16L18 21.8V20"/></g></g></svg>
<div class="t" style="top:195px;font-size:12px;line-height:16px;height:16px;left:668.58px;color:#444;font-weight:bold;">冻结首行(<u>R</u>)</div>
<div class="t" style="top:213.6px;font-size:12px;line-height:16px;height:16px;left:668.58px;color:#4e4e4e;">滚动工作表其余部分时，保持</div>
<div class="t" style="top:229.6px;font-size:12px;line-height:16px;height:16px;left:668.58px;color:#4e4e4e;">首行可见。</div>
<svg class="ic" style="left:624px;top:205px;" width="30" height="27" viewBox="0 0 30 27"><g transform="translate(1.5 1.5)"><path fill="#fff" d="M0 0H27V20H18V22L16 24H10V20H9V22L7 24H0z"/><path d="M0.8 4.1L8.2 0.9" stroke="#8fb0dc" stroke-width="1" fill="none"/><path d="M9.8 4.1L17.2 0.9" stroke="#8fb0dc" stroke-width="1" fill="none"/><path d="M18.8 4.1L26.2 0.9" stroke="#8fb0dc" stroke-width="1" fill="none"/><g fill="none" stroke="#6a6a6a" stroke-width="1"><path d="M0 0H27V20H0z"/><path d="M9 0V20"/><path d="M18 0V20"/><path d="M0 5H27"/><path d="M0 10H27"/><path d="M0 15H27"/><path d="M0 20V24H7L9 21.8V20"/><path d="M10 20V23Q10 24 11 24H16L18 21.8V20"/></g></g></svg>
<div class="t" style="top:252.4px;font-size:12px;line-height:16px;height:16px;left:668.58px;color:#444;font-weight:bold;">冻结首列(<u>C</u>)</div>
<div class="t" style="top:271px;font-size:12px;line-height:16px;height:16px;left:668.58px;color:#4e4e4e;">滚动工作表其余部分时，保持</div>
<div class="t" style="top:287px;font-size:12px;line-height:16px;height:16px;left:668.58px;color:#4e4e4e;">首列可见。</div>
<svg class="ic" style="left:624px;top:262px;" width="30" height="27" viewBox="0 0 30 27"><g transform="translate(1.5 1.5)"><path fill="#fff" d="M0 0H27V20H18V22L16 24H10V20H9V22L7 24H0z"/><path d="M0.8 4.1L8.2 0.9" stroke="#8fb0dc" stroke-width="1" fill="none"/><path d="M0.8 9.1L8.2 5.9" stroke="#8fb0dc" stroke-width="1" fill="none"/><path d="M0.8 14.1L8.2 10.9" stroke="#8fb0dc" stroke-width="1" fill="none"/><path d="M0.8 19.1L8.2 15.9" stroke="#8fb0dc" stroke-width="1" fill="none"/><g fill="none" stroke="#6a6a6a" stroke-width="1"><path d="M0 0H27V20H0z"/><path d="M9 0V20"/><path d="M18 0V20"/><path d="M0 5H27"/><path d="M0 10H27"/><path d="M0 15H27"/><path d="M0 20V24H7L9 21.8V20"/><path d="M10 20V23Q10 24 11 24H16L18 21.8V20"/></g></g></svg>

</body>
</html>
